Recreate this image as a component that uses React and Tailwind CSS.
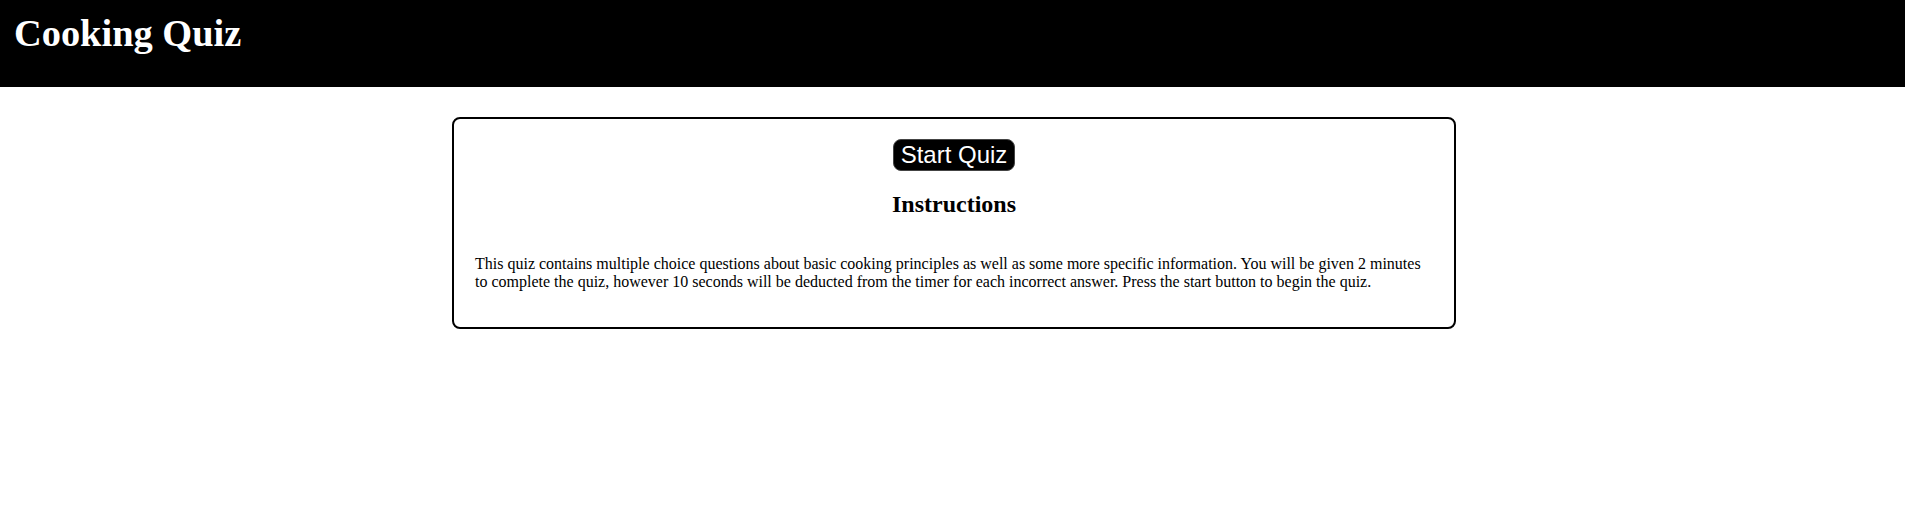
export default function App() {
  return (
    <div className="min-h-[520px] bg-white text-black">
      <header className="h-[87px] bg-black px-[14px] pt-[12px]">
        <h1 className="text-[38.4px] leading-[42px] font-bold text-white font-['Liberation_Serif','Times_New_Roman',serif]">
          Cooking Quiz
        </h1>
      </header>

      <div className="pl-[3px]">
        <main className="mt-[30px] mx-auto w-[1004px] border-2 border-black rounded-[8px] px-[21px] pt-[20px] pb-[36px] font-['Liberation_Serif','Times_New_Roman',serif]">
          <div className="flex justify-center">
            <button className="bg-black text-white border border-[#444] rounded-[8px] px-[7px] py-[1px] text-[24px] leading-[28px] font-['Liberation_Sans',Arial,sans-serif]">
              Start Quiz
            </button>
          </div>
          <h2 className="mt-[20px] text-center text-[24px] leading-[27px] font-bold">Instructions</h2>
          <p className="mt-[37px] text-[16px] leading-[18px]">
            This quiz contains multiple choice questions about basic cooking principles as well as some more specific information. You will be given 2 minutes to complete the quiz, however 10 seconds will be deducted from the timer for each incorrect answer. Press the start button to begin the quiz.
          </p>
        </main>
      </div>
    </div>
  )
}
